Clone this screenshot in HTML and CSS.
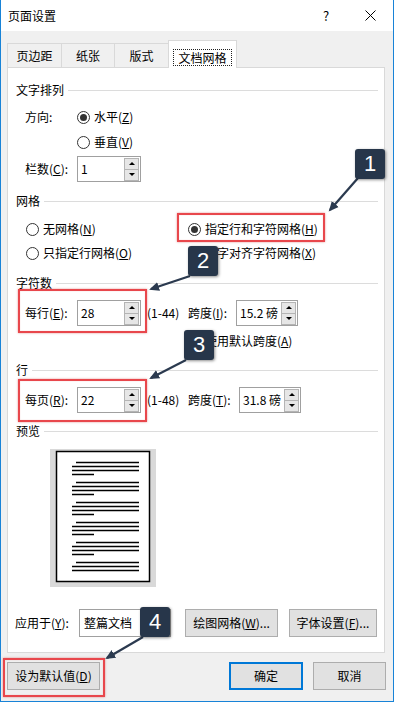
FILE: index.html
```html
<!DOCTYPE html>
<html lang="zh-CN">
<head>
<meta charset="utf-8">
<title>页面设置</title>
<link rel="stylesheet" href="styles.css">
</head>
<body>
<div class="window">
  <div class="titlebar">
    <span class="title">页面设置</span>
    <span class="help">?</span>
    <span class="close"><svg width="11" height="11" viewBox="0 0 11 11"><path d="M0.5 0.5 L10.5 10.5 M10.5 0.5 L0.5 10.5" stroke="#000" stroke-width="1" fill="none"/></svg></span>
  </div>
  <div class="tabs">
    <div class="tab t1">页边距</div>
    <div class="tab t2">纸张</div>
    <div class="tab t3">版式</div>
    <div class="tab active"><span class="focus">文档网格</span></div>
  </div>
  <div class="panel">
    <div class="legend l-text"><span>文字排列</span><i></i></div>
    <div class="row r-dir"><span class="lbl">方向:</span><span class="radio on"></span><span class="rtext">水平(<u>Z</u>)</span></div>
    <div class="row r-vert"><span class="radio"></span><span class="rtext">垂直(<u>V</u>)</span></div>
    <div class="row r-cols"><span class="lbl">栏数(<u>C</u>):</span>
      <span class="spin s1"><span class="val">1</span><span class="btns"><b class="up"></b><b class="dn"></b></span></span>
    </div>

    <div class="legend l-grid"><span>网格</span><i></i></div>
    <div class="row r-g1">
      <span class="gcol"><span class="radio"></span><span class="rtext">无网格(<u>N</u>)</span></span>
      <span class="gcol"><span class="radio on"></span><span class="rtext">指定行和字符网格(<u>H</u>)</span></span>
    </div>
    <div class="row r-g2">
      <span class="gcol"><span class="radio"></span><span class="rtext">只指定行网格(<u>O</u>)</span></span>
      <span class="gcol"><span class="radio"></span><span class="rtext">文字对齐字符网格(<u>X</u>)</span></span>
    </div>

    <div class="legend l-chars"><span>字符数</span><i></i></div>
    <div class="row r-spin r-chars"><span class="lbl">每行(<u>E</u>):</span>
      <span class="spin s1"><span class="val">28</span><span class="btns"><b class="up"></b><b class="dn"></b></span></span>
      <span class="range">(1-44)</span>
      <span class="lbl2">跨度(<u>I</u>):</span>
      <span class="spin s2"><span class="val">15.2 磅</span><span class="btns"><b class="up"></b><b class="dn"></b></span></span>
    </div>
    <div class="row r-check"><span class="check"></span><span class="rtext">使用默认跨度(<u>A</u>)</span></div>

    <div class="legend l-lines"><span>行</span><i></i></div>
    <div class="row r-spin r-lines"><span class="lbl">每页(<u>R</u>):</span>
      <span class="spin s1"><span class="val">22</span><span class="btns"><b class="up"></b><b class="dn"></b></span></span>
      <span class="range">(1-48)</span>
      <span class="lbl2">跨度(<u>T</u>):</span>
      <span class="spin s2 s2b"><span class="val">31.8 磅</span><span class="btns"><b class="up"></b><b class="dn"></b></span></span>
    </div>

    <div class="legend l-prev"><span>预览</span><i></i></div>
    <div class="preview">
      <svg width="106" height="138" viewBox="0 0 106 138">
        <rect x="0" y="0" width="106" height="138" fill="#d9d9d9"/>
        <rect x="6.5" y="2.5" width="93" height="130" fill="#fff" stroke="#000" stroke-width="1.5"/>
        <g stroke="#000" stroke-width="1.3">
          <path d="M26 13.5H89 M22 17.5H89 M22 21.5H89 M22 25.5H44"/>
          <path d="M26 33.5H89 M22 37.5H89 M22 41.5H89 M22 45.5H44"/>
          <path d="M26 53.5H89 M22 57.5H89 M22 61.5H89 M22 65.5H44"/>
          <path d="M26 73.5H89 M22 77.5H89 M22 81.5H89 M22 85.5H44"/>
          <path d="M26 93.5H89 M22 97.5H89 M22 101.5H89 M22 105.5H44"/>
          <path d="M26 113.5H89 M22 117.5H89 M22 121.5H89"/>
        </g>
      </svg>
    </div>

    <div class="row r-apply">
      <span class="lbl3">应用于(<u>Y</u>):</span>
      <span class="combo"><span class="val">整篇文档</span><span class="drop"></span></span>
      <span class="btn b-draw">绘图网格(<u>W</u>)...</span>
      <span class="btn b-font">字体设置(<u>F</u>)...</span>
    </div>
  </div>
  <div class="footer">
    <span class="btn b-def">设为默认值(<u>D</u>)</span>
    <span class="btn b-ok">确定</span>
    <span class="btn b-cancel">取消</span>
  </div>
</div>

<div class="overlay">
  <div class="redbox rb1"></div>
  <div class="redbox rb2"></div>
  <div class="redbox rb3"></div>
  <div class="redbox rb4"></div>
  <svg class="arrows" width="394" height="702" viewBox="0 0 394 702">
    <defs>
      <marker id="ah" markerWidth="11" markerHeight="10" refX="8" refY="5" orient="auto" markerUnits="userSpaceOnUse">
        <path d="M0,0.5 L10,5 L0,9.5 z" fill="#2b3a4f"/>
      </marker>
    </defs>
    <g stroke="#2b3a4f" stroke-width="2.2" fill="none" marker-end="url(#ah)">
      <line x1="358" y1="178" x2="330" y2="210"/>
      <line x1="190" y1="276" x2="151" y2="289"/>
      <line x1="186" y1="360" x2="151" y2="378"/>
      <line x1="143" y1="637" x2="107" y2="658"/>
    </g>
  </svg>
  <div class="badge bd1">1</div>
  <div class="badge bd2">2</div>
  <div class="badge bd3">3</div>
  <div class="badge bd4">4</div>
</div>
</body>
</html>
```

FILE: styles.css
```css
* { box-sizing: border-box; }

body {
  margin: 0;
  position: relative;
  width: 394px;
  height: 702px;
  font: 12px/16px "Noto Sans CJK SC", "Microsoft YaHei", sans-serif;
  color: #000;
  overflow: hidden;
}

u { text-decoration: underline; text-underline-offset: 1px; }

.window {
  width: 394px;
  height: 702px;
  background: #f0f0f0;
  border: 1px solid #1883d7;
  border-top: none;
}

/* title bar */
.titlebar {
  height: 31px;
  background: #fff;
  display: flex;
  align-items: center;
  padding-left: 7px;
  padding-right: 13px;
}
.title { flex: 1; }
.help {
  width: 14px;
  text-align: center;
  font-size: 13px;
  margin-right: 27px;
}
.close {
  width: 20px;
  height: 20px;
  display: flex;
  align-items: center;
  justify-content: center;
}

/* tabs */
.tabs {
  display: flex;
  align-items: flex-end;
  height: 27px;
  margin-top: 9px;
  padding-left: 6px;
  position: relative;
  z-index: 1;
}
.tab {
  height: 24px;
  border: 1px solid #d9d9d9;
  border-bottom: none;
  margin-right: -1px;
  display: flex;
  align-items: center;
  justify-content: center;
  background: #f0f0f0;
  padding-top: 1px;
}
.t1 { width: 55px; }
.t2 { width: 54px; }
.t3 { width: 55px; }
.tab.active {
  width: 69px;
  height: 28px;
  margin-bottom: -1px;
  background: #fff;
  align-items: flex-start;
  padding-top: 8px;
}
.focus {
  display: block;
  height: 17px;
  line-height: 15px;
  padding: 0 4px;
  border: 1px dotted #222;
}

/* panel */
.panel {
  margin-left: 6px;
  width: 378px;
  background: #fff;
  border: 1px solid #d9d9d9;
  padding: 0 6px 15px 8px;
}

.legend {
  display: flex;
  align-items: center;
  height: 16px;
}
.legend i {
  flex: 1;
  height: 1px;
  background: #dcdcdc;
  margin-left: 4px;
}
.l-text { margin-top: 14px; }
.l-grid { margin-top: 11px; }
.l-chars { margin-top: 12px; }
.l-lines { margin-top: 11px; }
.l-prev { margin-top: 10px; }

.row {
  display: flex;
  align-items: center;
  height: 20px;
}
.lbl { width: 52px; flex: none; }
.r-dir { margin-top: 9px; padding-left: 9px; }
.r-vert { margin-top: 5px; padding-left: 61px; }
.r-cols { margin-top: 4px; padding-left: 9px; height: 26px; }

.rtext { margin-left: 4px; white-space: nowrap; }

.radio {
  width: 13px;
  height: 13px;
  flex: none;
  border: 1px solid #333;
  border-radius: 50%;
  display: flex;
  align-items: center;
  justify-content: center;
  background: #fff;
}
.radio.on::after {
  content: "";
  width: 7px;
  height: 7px;
  border-radius: 50%;
  background: #333;
}
.check {
  width: 13px;
  height: 13px;
  flex: none;
  border: 1px solid #333;
  background: #fff;
}

.r-g1 { margin-top: 10px; padding-left: 10px; }
.r-g2 { margin-top: 4px; padding-left: 10px; }
.gcol { display: flex; align-items: center; width: 162px; flex: none; }

/* spinners */
.spin {
  display: flex;
  align-items: center;
  height: 26px;
  border: 1px solid #a0a0a0;
  background: #fff;
  padding-left: 3px;
  padding-right: 1px;
  flex: none;
}
.s1 { width: 64px; }
.s2 { width: 62px; }
.s2b { margin-left: 3px; }
.val { flex: 1; white-space: nowrap; font-size: 12px; }
.btns {
  width: 15px;
  height: 23px;
  display: flex;
  flex-direction: column;
}
.btns b {
  flex: 1;
  border: 1px solid #b4b4b4;
  background: #e6e6e6;
  display: flex;
  align-items: center;
  justify-content: center;
}
.btns b + b { border-top: none; }
.btns .up::after {
  content: "";
  border-left: 3px solid transparent;
  border-right: 3px solid transparent;
  border-bottom: 3px solid #000;
}
.btns .dn::after {
  content: "";
  border-left: 3px solid transparent;
  border-right: 3px solid transparent;
  border-top: 3px solid #000;
}

.r-spin { height: 26px; padding-left: 9px; }
.r-chars { margin-top: 9px; }
.r-lines { margin-top: 9px; }
.range { width: 41px; margin-left: 6px; flex: none; }
.lbl2 { width: 48px; flex: none; white-space: nowrap; }

.r-check { margin-top: 5px; padding-left: 172px; }

/* preview */
.preview {
  margin-top: 10px;
  margin-left: 34px;
  width: 106px;
  height: 138px;
}
.preview svg { display: block; }

/* apply row */
.r-apply {
  margin-top: 22px;
  height: 28px;
  margin-left: -1px;
}
.lbl3 { width: 64px; flex: none; }
.combo {
  width: 92px;
  height: 28px;
  border: 1px solid #a0a0a0;
  background: #fff;
  display: flex;
  align-items: center;
  padding-left: 4px;
  flex: none;
}
.drop {
  width: 14px;
  display: flex;
  justify-content: center;
}
.drop::after {
  content: "";
  border-left: 4px solid transparent;
  border-right: 4px solid transparent;
  border-top: 4px solid #333;
}

.btn {
  height: 28px;
  background: #e1e1e1;
  border: 1px solid #adadad;
  display: flex;
  align-items: center;
  justify-content: center;
  white-space: nowrap;
  flex: none;
}
.b-draw { width: 93px; margin-left: 14px; }
.b-font { width: 88px; margin-left: 11px; }

/* footer */
.footer {
  display: flex;
  margin-top: 9px;
  padding-left: 6px;
  padding-right: 7px;
}
.b-def { width: 93px; }
.b-ok {
  width: 74px;
  margin-left: auto;
  border-color: #0078d7;
  box-shadow: inset 0 0 0 1px #0078d7;
}
.b-cancel { width: 73px; margin-left: 10px; }

/* annotation overlay */
.overlay {
  position: absolute;
  left: 0;
  top: 0;
  width: 394px;
  height: 702px;
  pointer-events: none;
}
.arrows { position: absolute; left: 0; top: 0; }
.redbox {
  position: absolute;
  border: 2px solid #e8474c;
  box-shadow: 0 0 2px rgba(200, 40, 40, 0.5), inset 0 0 1px rgba(200, 40, 40, 0.4);
}
.rb1 { left: 177px; top: 213px; width: 148px; height: 29px; }
.rb2 { left: 18px; top: 289px; width: 129px; height: 44px; }
.rb3 { left: 18px; top: 379px; width: 129px; height: 43px; }
.rb4 { left: 3px; top: 658px; width: 102px; height: 39px; }

.badge {
  position: absolute;
  width: 30px;
  height: 30px;
  background: #27364a;
  color: #fff;
  border-radius: 3px;
  box-shadow: 1px 1px 3px rgba(0, 0, 0, 0.45);
  font: 22px/30px "Liberation Sans", Arial, sans-serif;
  text-align: center;
}
.bd1 { left: 355px; top: 149px; }
.bd2 { left: 188px; top: 246px; }
.bd3 { left: 184px; top: 330px; }
.bd4 { left: 140px; top: 607px; }
```
